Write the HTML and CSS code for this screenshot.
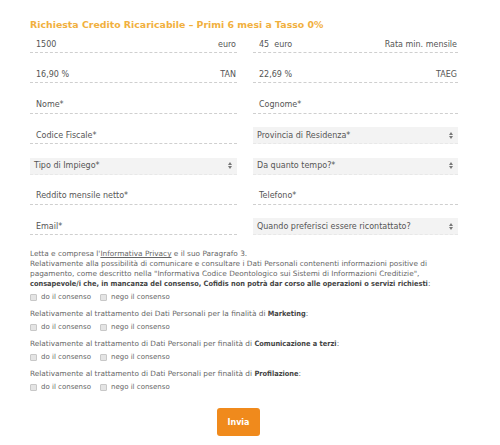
FILE: index.html
```html
<!DOCTYPE html>
<html lang="it">
<head>
    <meta charset="UTF-8">
    <title>Richiesta Credito Ricaricabile</title>
    <link rel="stylesheet" href="styles.css">
</head>
<body>
    <form class="request-form">
        <h2>Richiesta Credito Ricaricabile – Primi 6 mesi a Tasso 0%</h2>

        <div class="fields">
            <div class="field"><span>1500</span><span>euro</span></div>
            <div class="field"><span>45&nbsp;&nbsp;euro</span><span>Rata min. mensile</span></div>

            <div class="field"><span>16,90 %</span><span>TAN</span></div>
            <div class="field"><span>22,69 %</span><span>TAEG</span></div>

            <div class="field"><span>Nome*</span></div>
            <div class="field"><span>Cognome*</span></div>

            <div class="field"><span>Codice Fiscale*</span></div>
            <div class="field select">
                <span>Provincia di Residenza*</span>
                <svg class="arrows" width="4" height="7" viewBox="0 0 4 7"><path d="M2 0L4 3H0z M2 7L4 4H0z"/></svg>
            </div>

            <div class="field select">
                <span>Tipo di Impiego*</span>
                <svg class="arrows" width="4" height="7" viewBox="0 0 4 7"><path d="M2 0L4 3H0z M2 7L4 4H0z"/></svg>
            </div>
            <div class="field select">
                <span>Da quanto tempo?*</span>
                <svg class="arrows" width="4" height="7" viewBox="0 0 4 7"><path d="M2 0L4 3H0z M2 7L4 4H0z"/></svg>
            </div>

            <div class="field"><span>Reddito mensile netto*</span></div>
            <div class="field"><span>Telefono*</span></div>

            <div class="field"><span>Email*</span></div>
            <div class="field select">
                <span>Quando preferisci essere ricontattato?</span>
                <svg class="arrows" width="4" height="7" viewBox="0 0 4 7"><path d="M2 0L4 3H0z M2 7L4 4H0z"/></svg>
            </div>
        </div>

        <div class="privacy">
            <p>Letta e compresa l'<a href="#">Informativa Privacy</a> e il suo Paragrafo 3.</p>
            <p>Relativamente alla possibilità di comunicare e consultare i Dati Personali contenenti informazioni positive di<br>
            pagamento, come descritto nella "Informativa Codice Deontologico sui Sistemi di Informazioni Creditizie",<br>
            <b>consapevole/i che, in mancanza del consenso, Cofidis non potrà dar corso alle operazioni o servizi richiesti</b>:</p>
            <div class="consent">
                <label><input type="checkbox"> do il consenso</label>
                <label><input type="checkbox"> nego il consenso</label>
            </div>

            <p>Relativamente al trattamento dei Dati Personali per la finalità di <b>Marketing</b>:</p>
            <div class="consent">
                <label><input type="checkbox"> do il consenso</label>
                <label><input type="checkbox"> nego il consenso</label>
            </div>

            <p>Relativamente al trattamento di Dati Personali per finalità di <b>Comunicazione a terzi</b>:</p>
            <div class="consent">
                <label><input type="checkbox"> do il consenso</label>
                <label><input type="checkbox"> nego il consenso</label>
            </div>

            <p>Relativamente al trattamento di Dati Personali per finalità di <b>Profilazione</b>:</p>
            <div class="consent">
                <label><input type="checkbox"> do il consenso</label>
                <label><input type="checkbox"> nego il consenso</label>
            </div>
        </div>

        <div class="actions">
            <button type="button">Invia</button>
        </div>
    </form>
</body>
</html>
```

FILE: styles.css
```css
body {
    margin: 0;
    background: #fff;
    font-family: 'DejaVu Sans', 'Open Sans', sans-serif;
    color: #555;
}

.request-form {
    width: 428px;
    margin-left: 30px;
    padding-top: 18px;
}

h2 {
    margin: 0;
    font-size: 9.4px;
    line-height: 13px;
    font-weight: bold;
    color: #f1b03e;
}

.fields {
    display: grid;
    grid-template-columns: 207px 205px;
    column-gap: 16px;
    row-gap: 13.4px;
    margin-top: 5px;
}

.field {
    height: 16px;
    display: flex;
    justify-content: space-between;
    align-items: center;
    padding: 0 1px 0 6px;
    border-bottom: 1px dashed #cfcfcf;
    font-size: 8px;
    color: #555;
}

.field.select {
    background: #f3f3f3;
    border-bottom-color: #e8e8e8;
    padding: 0 5px 0 4px;
}

.arrows {
    fill: #777;
}

.privacy {
    margin-top: 14px;
    font-size: 7.35px;
    color: #666;
}

.privacy p {
    margin: 0;
    line-height: 10px;
    white-space: nowrap;
}

.privacy a {
    color: #666;
}

.privacy b {
    font-family: 'DejaVu Sans Condensed', 'DejaVu Sans', sans-serif;
    font-stretch: condensed;
    color: #444;
}

.consent {
    display: flex;
    gap: 9px;
    height: 12px;
    align-items: center;
    margin: 2px 0 6px;
    font-size: 7px;
}

.consent label {
    display: flex;
    align-items: center;
    gap: 4px;
}

.consent input {
    appearance: none;
    margin: 0;
    width: 7px;
    height: 7px;
    background: #e4e4e4;
    border: 1px solid #c8c8c8;
    border-radius: 1px;
}

.actions {
    display: flex;
    justify-content: center;
    margin-top: 15px;
    padding-right: 11px;
}

button {
    width: 43px;
    height: 28px;
    border: none;
    border-radius: 3px;
    background: #f08a1c;
    color: #fff;
    font-family: 'DejaVu Sans', sans-serif;
    font-size: 8px;
    font-weight: bold;
}
```
